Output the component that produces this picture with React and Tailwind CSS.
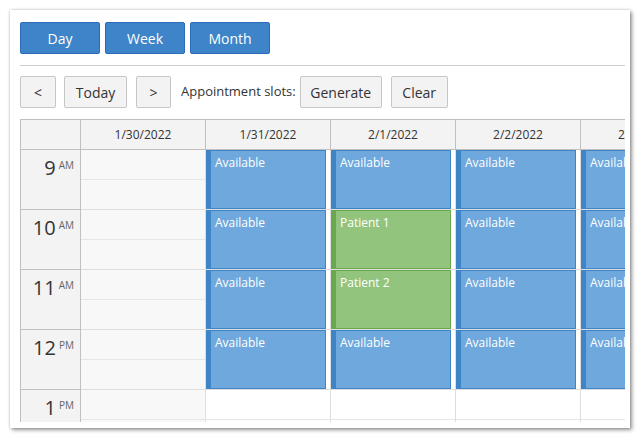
import React from 'react';

const days = [
  { label: '1/30/2022', off: true, slots: [null, null, null, null, null] },
  { label: '1/31/2022', slots: ['a', 'a', 'a', 'a', null] },
  { label: '2/1/2022', slots: ['a', 'Patient 1', 'Patient 2', 'a', null] },
  { label: '2/2/2022', slots: ['a', 'a', 'a', 'a', null] },
  { label: '2/3/2022', slots: ['a', 'a', 'a', 'a', null] },
];

const hours = [
  { h: '9', ap: 'AM' },
  { h: '10', ap: 'AM' },
  { h: '11', ap: 'AM' },
  { h: '12', ap: 'PM' },
  { h: '1', ap: 'PM' },
];

const Event = ({ text }) => {
  const busy = text !== 'a';
  return (
    <div
      className={`h-[59px] w-[120px] border border-l-[5px] pl-[4px] pt-[4px] text-[12px] leading-[16px] text-white ${
        busy ? 'bg-[#93c47d] border-[#6aa84f]' : 'bg-[#6fa8dc] border-[#3d85c6]'
      }`}
    >
      {busy ? text : 'Available'}
    </div>
  );
};

const Cell = ({ day, slot }) => (
  <div
    className={`w-[125px] shrink-0 h-[60px] border-r border-b border-[#dedede] ${
      day.off ? 'bg-[#f8f8f8]' : 'bg-white'
    }`}
  >
    {slot ? (
      <Event text={slot} />
    ) : (
      <>
        <div className="h-[30px] border-b border-[#e6e6e6]" />
        <div className="h-[29px]" />
      </>
    )}
  </div>
);

const GrayBtn = ({ children, w }) => (
  <button className={`${w} h-[32px] shrink-0 bg-[#f3f3f3] border border-[#c6c6c6] rounded-[2px] text-[14px] text-[#333]`}>
    {children}
  </button>
);

const BlueBtn = ({ children }) => (
  <button className="w-[80px] h-[32px] bg-[#3d84c8] border border-[#2b6cbf] rounded-[2px] text-[14px] text-white">
    {children}
  </button>
);

export default function App() {
  return (
    <div className="w-[640px] h-[438px] bg-white overflow-hidden pt-[10px] pl-[10px] font-['Open_Sans',sans-serif]">
      <div className="w-[620px] h-[418px] bg-white overflow-hidden pl-[10px] pt-[12px] shadow-[2px_2px_4px_rgba(0,0,0,0.4),0_0_3px_rgba(0,0,0,0.2)]">
        {/* view switcher */}
        <div className="flex gap-[5px]">
          <BlueBtn>Day</BlueBtn>
          <BlueBtn>Week</BlueBtn>
          <BlueBtn>Month</BlueBtn>
        </div>

        <div className="mt-[11px] w-[605px] border-t border-[#cfcfcf]" />

        {/* toolbar */}
        <div className="mt-[10px] flex items-center">
          <GrayBtn w="w-[36px]">&lt;</GrayBtn>
          <div className="w-[8px]" />
          <GrayBtn w="w-[63px]">Today</GrayBtn>
          <div className="w-[9px]" />
          <GrayBtn w="w-[35px]">&gt;</GrayBtn>
          <span className="ml-[10px] mr-[4px] shrink-0 whitespace-nowrap text-[13px] text-[#333]">Appointment slots:</span>
          <GrayBtn w="w-[82px]">Generate</GrayBtn>
          <div className="w-[9px]" />
          <GrayBtn w="w-[57px]">Clear</GrayBtn>
        </div>

        {/* calendar */}
        <div className="mt-[11px] w-[605px] h-[303px] overflow-hidden border-t border-l border-[#c0c0c0]">
          <div className="flex h-[30px] border-b border-[#c0c0c0] bg-[#f3f3f3] text-[12px] text-[#333]">
            <div className="w-[60px] shrink-0 border-r border-[#c0c0c0]" />
            {days.map((d) => (
              <div key={d.label} className="w-[125px] shrink-0 border-r border-[#c0c0c0] flex items-center justify-center">
                {d.label}
              </div>
            ))}
          </div>

          {hours.map((hr, i) => (
            <div key={hr.h} className="flex">
              <div className="w-[60px] shrink-0 h-[60px] border-r border-b border-[#c0c0c0] bg-[#f3f3f3] flex justify-end items-start pr-[6px] pt-[4px] text-[#333]">
                <span className="text-[20px] leading-[27px]">{hr.h}</span>
                <span className="ml-[3px] mt-[4px] text-[10px] leading-[14px] text-[#666]">{hr.ap}</span>
              </div>
              {days.map((d) => (
                <Cell key={d.label} day={d} slot={d.slots[i]} />
              ))}
            </div>
          ))}
        </div>
      </div>
    </div>
  );
}
